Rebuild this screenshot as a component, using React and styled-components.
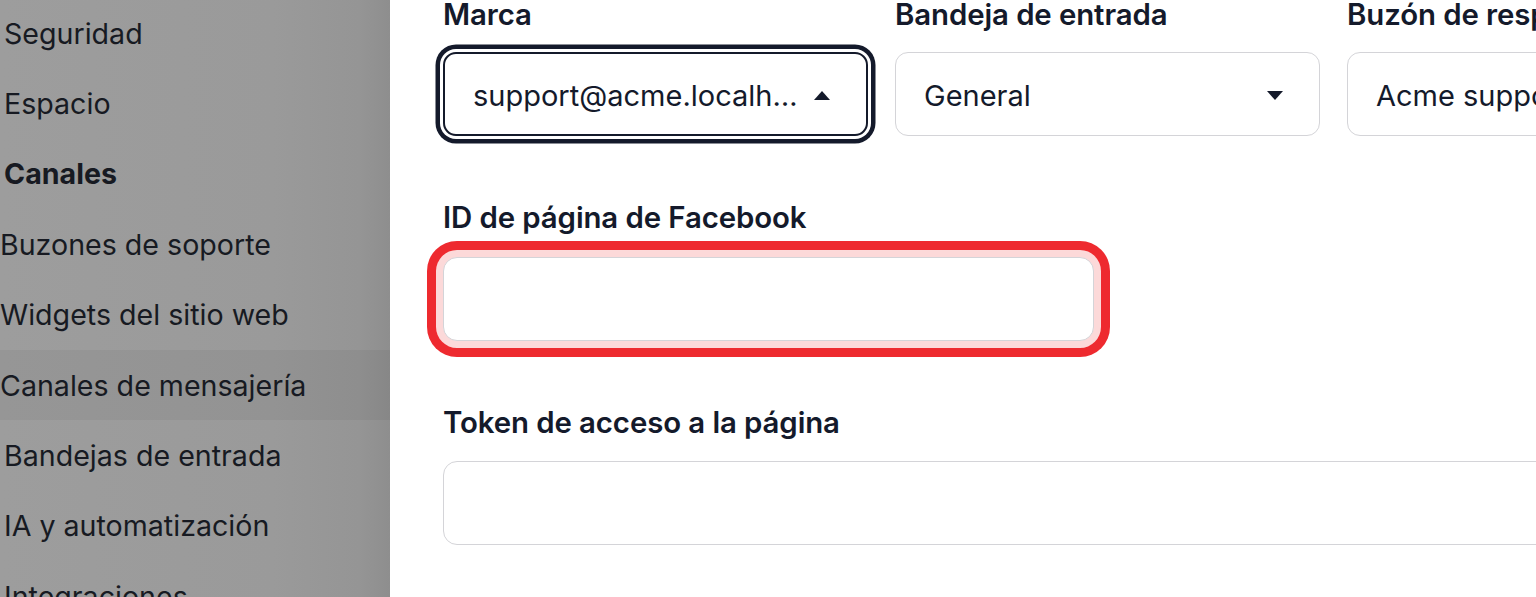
import styled, { createGlobalStyle } from 'styled-components';

const GlobalStyle = createGlobalStyle`
  html, body {
    margin: 0;
    padding: 0;
    height: 100%;
    overflow: hidden;
    background: #ffffff;
  }
  body {
    font-family: Inter, "Noto Sans", "Liberation Sans", sans-serif;
    color: #141a2b;
  }
  #root {
    height: 100%;
  }
`;

const Page = styled.div`
  display: flex;
  height: 597px;
  width: 1536px;
  overflow: hidden;
`;

// Sidebar seen through a modal backdrop, so everything is greyed out
const Sidebar = styled.nav`
  width: 390px;
  flex-shrink: 0;
  display: flex;
  flex-direction: column;
  margin-top: -2px;
  background: linear-gradient(to right, #9d9d9d 0%, #9a9a9a 70%, #959595 92%, #8e8e8e 100%);
`;

const NavItem = styled.div`
  height: 70.4px;
  flex-shrink: 0;
  display: flex;
  align-items: center;
  padding-left: ${(p) => (p.$sub ? '0px' : '4px')};
  font-size: 28.6px;
  font-weight: ${(p) => (p.$heading ? 700 : 400)};
  color: #171a22;
  white-space: nowrap;
  background: ${(p) => (p.$active ? 'rgba(0, 0, 0, 0.045)' : 'transparent')};
`;

const Main = styled.main`
  flex: 1;
  padding-left: 53px;
  display: flex;
  flex-direction: column;
  gap: 67px;
  overflow: hidden;
`;

const Row = styled.div`
  display: grid;
  grid-template-columns: repeat(3, 425px);
  column-gap: 27px;
`;

const Field = styled.div`
  display: flex;
  flex-direction: column;
  gap: ${(p) => p.$gap || 23}px;
`;

const Label = styled.label`
  font-size: 29.4px;
  line-height: 30px;
  font-weight: 600;
  letter-spacing: -0.1px;
  color: #141a2b;
  white-space: nowrap;
`;

const Select = styled.div`
  box-sizing: border-box;
  height: 84px;
  display: flex;
  align-items: center;
  gap: 10px;
  padding: 2px 36px 0 28px;
  border: ${(p) => (p.$focused ? '2px solid #141a2b' : '1.5px solid #d4d4d8')};
  border-radius: 13px;
  background: #fff;
  box-shadow: ${(p) => (p.$focused ? '0 0 0 3px #ffffff, 0 0 0 7.5px #141a2b' : 'none')};
  font-size: 29px;
  color: #141a2b;
`;

const SelectValue = styled.span`
  flex: 1;
  min-width: 0;
  overflow: hidden;
  white-space: nowrap;
  text-overflow: ellipsis;
`;

const Caret = styled.span`
  width: 0;
  height: 0;
  flex-shrink: 0;
  border-left: 8px solid transparent;
  border-right: 8px solid transparent;
  ${(p) =>
    p.$up
      ? 'border-bottom: 9px solid #141a2b;'
      : 'border-top: 9px solid #141a2b;'}
`;

const TextInput = styled.input`
  box-sizing: border-box;
  height: 84px;
  width: ${(p) => p.$width || '100%'};
  border: 1.5px solid #d4d4d8;
  border-radius: 14px;
  background: #fff;
  outline: none;
  font: inherit;
  font-size: 29px;
  padding: 0 28px;
  box-shadow: ${(p) =>
    p.$highlight ? '0 0 0 7px #fcd9d9, 0 0 0 16px #ee2a2f' : 'none'};
`;

const TokenInput = styled(TextInput)`
  width: calc(100% + 40px);
`;

const navItems = [
  { label: 'Seguridad' },
  { label: 'Espacio' },
  { label: 'Canales', heading: true },
  { label: 'Buzones de soporte', sub: true },
  { label: 'Widgets del sitio web', sub: true },
  { label: 'Canales de mensajería', sub: true, active: true },
  { label: 'Bandejas de entrada' },
  { label: 'IA y automatización' },
  { label: 'Integraciones' },
];

export default function App() {
  return (
    <>
      <GlobalStyle />
      <Page>
        <Sidebar>
          {navItems.map((item) => (
            <NavItem
              key={item.label}
              $heading={item.heading}
              $sub={item.sub}
              $active={item.active}
            >
              {item.label}
            </NavItem>
          ))}
        </Sidebar>
        <Main>
          <Row>
            <Field $gap={22}>
              <Label>Marca</Label>
              <Select $focused>
                <SelectValue>support@acme.localhost</SelectValue>
                <Caret $up />
              </Select>
            </Field>
            <Field $gap={22}>
              <Label>Bandeja de entrada</Label>
              <Select>
                <SelectValue>General</SelectValue>
                <Caret />
              </Select>
            </Field>
            <Field $gap={22}>
              <Label>Buzón de respuesta</Label>
              <Select>
                <SelectValue>Acme support</SelectValue>
                <Caret />
              </Select>
            </Field>
          </Row>
          <Field $gap={24}>
            <Label>ID de página de Facebook</Label>
            <TextInput $highlight $width="651px" />
          </Field>
          <Field $gap={23}>
            <Label>Token de acceso a la página</Label>
            <TokenInput />
          </Field>
        </Main>
      </Page>
    </>
  );
}
